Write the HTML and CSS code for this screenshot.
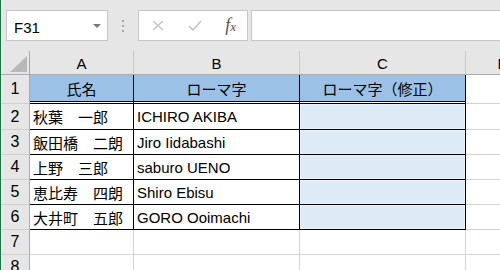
FILE: index.html
```html
<!DOCTYPE html>
<html lang="ja">
<head>
    <meta charset="UTF-8">
    <title>ローマ字</title>
    <link rel="stylesheet" href="styles.css">
</head>
<body>
    <div class="app">
        <!-- Formula bar -->
        <div class="toolbar">
            <div class="name-box">
                <span>F31</span>
                <svg class="drop" width="8" height="4" viewBox="0 0 8 4"><path d="M0 0 L8 0 L4 4 Z" fill="#777"/></svg>
            </div>
            <div class="grip"><i></i><i></i><i></i></div>
            <div class="fx-buttons">
                <svg width="12" height="11" viewBox="0 0 12 11"><path d="M1 1 L11 10 M11 1 L1 10" stroke="#c4c4c4" stroke-width="1.4" fill="none"/></svg>
                <svg width="14" height="11" viewBox="0 0 14 11"><path d="M1 6 L5 10 L13 1" stroke="#c4c4c4" stroke-width="1.6" fill="none"/></svg>
                <span class="fx">f<small>x</small></span>
            </div>
            <div class="formula-bar"></div>
        </div>

        <!-- Sheet -->
        <div class="sheet">
            <div class="hd corner"><svg width="17" height="16" viewBox="0 0 17 16"><path d="M17 0 L17 16 L0 16 Z" fill="#b9b9b9"/></svg></div>
            <div class="hd">A</div>
            <div class="hd">B</div>
            <div class="hd">C</div>
            <div class="hd">D</div>

            <div class="rh">1</div>
            <div class="c t head">氏名</div>
            <div class="c t head">ローマ字</div>
            <div class="c t head">ローマ字（修正）</div>
            <div class="c"></div>

            <div class="rh">2</div>
            <div class="c t">秋葉　一郎</div>
            <div class="c t">ICHIRO AKIBA</div>
            <div class="c t fix"></div>
            <div class="c"></div>

            <div class="rh">3</div>
            <div class="c t">飯田橋　二朗</div>
            <div class="c t">Jiro Iidabashi</div>
            <div class="c t fix"></div>
            <div class="c"></div>

            <div class="rh">4</div>
            <div class="c t">上野　三郎</div>
            <div class="c t">saburo UENO</div>
            <div class="c t fix"></div>
            <div class="c"></div>

            <div class="rh">5</div>
            <div class="c t">恵比寿　四朗</div>
            <div class="c t">Shiro Ebisu</div>
            <div class="c t fix"></div>
            <div class="c"></div>

            <div class="rh">6</div>
            <div class="c t">大井町　五郎</div>
            <div class="c t">GORO Ooimachi</div>
            <div class="c t fix"></div>
            <div class="c"></div>

            <div class="rh">7</div>
            <div class="c"></div>
            <div class="c"></div>
            <div class="c"></div>
            <div class="c"></div>

            <div class="rh">8</div>
            <div class="c"></div>
            <div class="c"></div>
            <div class="c"></div>
            <div class="c"></div>
        </div>
    </div>
</body>
</html>
```

FILE: styles.css
```css
/* General */
body {
    margin: 0;
    font-family: "Liberation Sans", "Noto Sans CJK JP", sans-serif;
    font-size: 15px;
    color: #000;
    background-color: #fff;
}

.app {
    width: 499px;
    height: 270px;
    overflow: hidden;
    border-left: 1px solid #217346;
    background-color: #e6e6e6;
}

/* Formula bar */
.toolbar {
    display: flex;
    align-items: stretch;
    height: 31px;
    padding: 10px 0 10px 5px;
}

.name-box,
.fx-buttons,
.formula-bar {
    box-sizing: border-box;
    background-color: #fff;
    border: 1px solid #c6c6c6;
}

.name-box {
    width: 102px;
    display: flex;
    align-items: center;
    justify-content: space-between;
    padding: 3px 6px 0 7px;
    font-size: 15px;
}

.name-box .drop {
    margin-bottom: 3px;
}

.grip {
    width: 30px;
    display: flex;
    flex-direction: column;
    align-items: center;
    justify-content: center;
    gap: 3px;
}

.grip i {
    width: 2px;
    height: 2px;
    background-color: #a8a8a8;
}

.fx-buttons {
    width: 110px;
    display: flex;
    align-items: center;
    justify-content: space-between;
    padding: 0 11px 0 13px;
}

.fx {
    font-family: "Liberation Serif", serif;
    font-style: italic;
    font-size: 18px;
    color: #555;
}

.fx small {
    font-size: 13px;
}

.formula-bar {
    flex: 1;
    margin-left: 3px;
    border-right: none;
}

/* Sheet grid */
.sheet {
    display: grid;
    grid-template-columns: 29px 104px 166px 166px 75px;
    grid-template-rows: 24px 29px 26px repeat(6, 25px);
    background-color: #fff;
}

.sheet > div {
    box-sizing: border-box;
    display: flex;
    align-items: center;
    white-space: nowrap;
    overflow: hidden;
}

.hd {
    justify-content: center;
    background-color: #e6e6e6;
    border-right: 1px solid #c8c8c8;
    border-bottom: 1px solid #ababab;
    padding-top: 1px;
}

.corner {
    justify-content: flex-end;
    align-items: flex-end !important;
    padding: 0 2px 2px 0;
    border-right-color: #ababab;
}

.rh {
    justify-content: center;
    background-color: #e6e6e6;
    border-right: 1px solid #ababab;
    border-bottom: 1px solid #d0d0d0;
    font-size: 16px;
}

.c {
    padding-left: 3px;
    border-right: 1px solid #d4d4d4;
    border-bottom: 1px solid #d4d4d4;
}

.t {
    border-color: #000;
}

.head {
    justify-content: center;
    padding-left: 0;
    background-color: #9bc2e6;
    background-clip: padding-box;
    border-bottom: 3px double #000;
}

.fix {
    background-color: #ddebf7;
    box-shadow: inset 0 0 0 1px #eaf2fa;
}
```
